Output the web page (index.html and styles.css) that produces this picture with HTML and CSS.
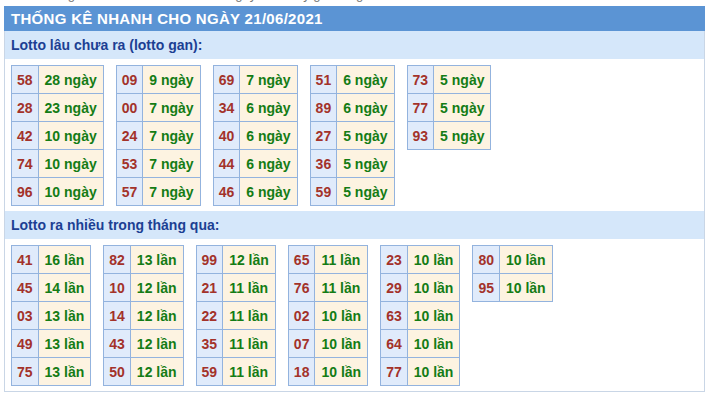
FILE: index.html
```html
<!DOCTYPE html>
<html>

<head>
  <meta charset="utf-8">
  <title>Thống kê nhanh</title>
  <link rel="stylesheet" href="styles.css">
</head>

<body>

  <p class="intro">Xem thống kê nhanh xổ số miền Bắc ngày hôm nay gồm lô gan và lô ra nhiều</p>

  <div class="box">
    <h2 class="box-title">Thống kê nhanh cho ngày 21/06/2021</h2>

    <h3 class="box-sub">Lotto lâu chưa ra (lotto gan):</h3>
    <div class="grid">
      <table class="stat">
        <tr><td class="num">58</td><td class="val">28 ngày</td></tr>
        <tr><td class="num">28</td><td class="val">23 ngày</td></tr>
        <tr><td class="num">42</td><td class="val">10 ngày</td></tr>
        <tr><td class="num">74</td><td class="val">10 ngày</td></tr>
        <tr><td class="num">96</td><td class="val">10 ngày</td></tr>
      </table>
      <table class="stat">
        <tr><td class="num">09</td><td class="val">9 ngày</td></tr>
        <tr><td class="num">00</td><td class="val">7 ngày</td></tr>
        <tr><td class="num">24</td><td class="val">7 ngày</td></tr>
        <tr><td class="num">53</td><td class="val">7 ngày</td></tr>
        <tr><td class="num">57</td><td class="val">7 ngày</td></tr>
      </table>
      <table class="stat">
        <tr><td class="num">69</td><td class="val">7 ngày</td></tr>
        <tr><td class="num">34</td><td class="val">6 ngày</td></tr>
        <tr><td class="num">40</td><td class="val">6 ngày</td></tr>
        <tr><td class="num">44</td><td class="val">6 ngày</td></tr>
        <tr><td class="num">46</td><td class="val">6 ngày</td></tr>
      </table>
      <table class="stat">
        <tr><td class="num">51</td><td class="val">6 ngày</td></tr>
        <tr><td class="num">89</td><td class="val">6 ngày</td></tr>
        <tr><td class="num">27</td><td class="val">5 ngày</td></tr>
        <tr><td class="num">36</td><td class="val">5 ngày</td></tr>
        <tr><td class="num">59</td><td class="val">5 ngày</td></tr>
      </table>
      <table class="stat">
        <tr><td class="num">73</td><td class="val">5 ngày</td></tr>
        <tr><td class="num">77</td><td class="val">5 ngày</td></tr>
        <tr><td class="num">93</td><td class="val">5 ngày</td></tr>
      </table>
    </div>

    <h3 class="box-sub">Lotto ra nhiều trong tháng qua:</h3>
    <div class="grid">
      <table class="stat">
        <tr><td class="num">41</td><td class="val">16 lần</td></tr>
        <tr><td class="num">45</td><td class="val">14 lần</td></tr>
        <tr><td class="num">03</td><td class="val">13 lần</td></tr>
        <tr><td class="num">49</td><td class="val">13 lần</td></tr>
        <tr><td class="num">75</td><td class="val">13 lần</td></tr>
      </table>
      <table class="stat">
        <tr><td class="num">82</td><td class="val">13 lần</td></tr>
        <tr><td class="num">10</td><td class="val">12 lần</td></tr>
        <tr><td class="num">14</td><td class="val">12 lần</td></tr>
        <tr><td class="num">43</td><td class="val">12 lần</td></tr>
        <tr><td class="num">50</td><td class="val">12 lần</td></tr>
      </table>
      <table class="stat">
        <tr><td class="num">99</td><td class="val">12 lần</td></tr>
        <tr><td class="num">21</td><td class="val">11 lần</td></tr>
        <tr><td class="num">22</td><td class="val">11 lần</td></tr>
        <tr><td class="num">35</td><td class="val">11 lần</td></tr>
        <tr><td class="num">59</td><td class="val">11 lần</td></tr>
      </table>
      <table class="stat">
        <tr><td class="num">65</td><td class="val">11 lần</td></tr>
        <tr><td class="num">76</td><td class="val">11 lần</td></tr>
        <tr><td class="num">02</td><td class="val">10 lần</td></tr>
        <tr><td class="num">07</td><td class="val">10 lần</td></tr>
        <tr><td class="num">18</td><td class="val">10 lần</td></tr>
      </table>
      <table class="stat">
        <tr><td class="num">23</td><td class="val">10 lần</td></tr>
        <tr><td class="num">29</td><td class="val">10 lần</td></tr>
        <tr><td class="num">63</td><td class="val">10 lần</td></tr>
        <tr><td class="num">64</td><td class="val">10 lần</td></tr>
        <tr><td class="num">77</td><td class="val">10 lần</td></tr>
      </table>
      <table class="stat">
        <tr><td class="num">80</td><td class="val">10 lần</td></tr>
        <tr><td class="num">95</td><td class="val">10 lần</td></tr>
      </table>
    </div>
  </div>

</body>

</html>
```

FILE: styles.css
```css
body {
  font-family: "Liberation Sans", Arial, sans-serif;
  margin: 0;
  padding: 0;
  background: #fff;
  color: #333;
}

.intro {
  margin: -13px 0 3px 12px;
  font-size: 13px;
  line-height: 16px;
  color: #777;
}

.box {
  margin: 0 3px 0 4px;
  border: 1px solid #c9d6e6;
  border-top: none;
}

.box-title {
  margin: 0 -1px;
  height: 25px;
  line-height: 26px;
  padding-left: 7px;
  background-color: #5b94d4;
  color: #fff;
  font-size: 15px;
  letter-spacing: 0.3px;
  font-weight: bold;
  text-transform: uppercase;
}

.box-sub {
  margin: 0;
  height: 28px;
  line-height: 28px;
  padding-left: 6px;
  background-color: #d5e7fa;
  color: #1c3f93;
  font-size: 14px;
  font-weight: bold;
}

.grid {
  display: flex;
  flex-wrap: wrap;
  align-items: flex-start;
  gap: 12px;
  padding: 6px 6px 5px;
}

.stat {
  border-collapse: collapse;
  font-size: 14px;
  font-weight: bold;
}

.stat td {
  height: 27px;
  padding: 0 6px;
  border: 1px solid #93b3de;
  white-space: nowrap;
}

.stat .num {
  padding: 0 5px;
  background-color: #e0ebfb;
  color: #a3322a;
  text-align: center;
}

.val {
  background-color: #fdf3e1;
  color: #147c15;
}
```
